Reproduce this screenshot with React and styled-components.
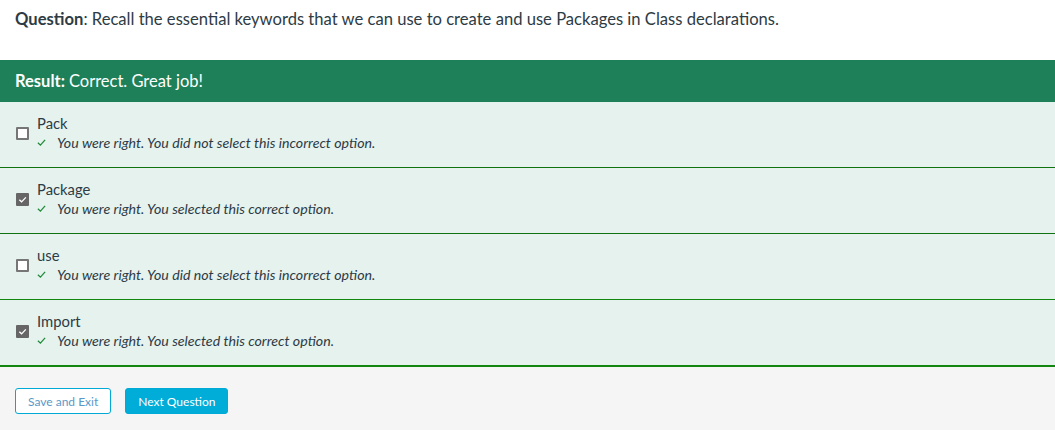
import React from 'react';
import styled, { createGlobalStyle } from 'styled-components';

const GlobalStyle = createGlobalStyle`
  html, body {
    margin: 0;
    padding: 0;
    background: #ffffff;
    font-family: Lato, "Open Sans", sans-serif;
    color: #2d3b45;
  }
`;

const Page = styled.div`
  width: 1055px;
  height: 430px;
  display: flex;
  flex-direction: column;
  overflow: hidden;
`;

const Question = styled.div`
  padding: 8px 15px 0;
  height: 60px;
  box-sizing: border-box;
  font-size: 16.6px;
  line-height: 22px;
  color: #2d3b45;

  b {
    font-weight: 700;
  }
`;

const ResultBar = styled.div`
  height: 42px;
  display: flex;
  align-items: center;
  padding: 0 15px;
  background: #1e8059;
  color: #ffffff;
  font-size: 16.5px;

  b {
    font-weight: 700;
    margin-right: 4px;
  }
`;

const Options = styled.div`
  background: #e6f2ee;
  box-shadow: 0 2px 3px rgba(0, 0, 0, 0.12);
`;

const Option = styled.div`
  display: flex;
  align-items: center;
  padding-left: 16px;
  box-sizing: border-box;
  border-top: ${({ $first, $last }) =>
    $first ? 'none' : `1px solid ${$last ? '#11870f' : '#0f730f'}`};
  border-bottom: ${({ $last }) => ($last ? '2px solid #11870f' : 'none')};
  height: ${({ $first, $last }) => ($first ? '65px' : $last ? '68px' : '66px')};
`;

const Box = styled.div`
  width: 13px;
  height: 13px;
  box-sizing: border-box;
  border-radius: 1px;
  margin-bottom: 2px;
  display: flex;
  align-items: center;
  justify-content: center;
  flex: 0 0 auto;
  border: ${({ $checked }) => ($checked ? 'none' : '2px solid #767676')};
  background: ${({ $checked }) => ($checked ? '#666666' : '#ffffff')};
`;

const OptionBody = styled.div`
  margin: 0 0 4px 8px;
  display: flex;
  flex-direction: column;
`;

const Label = styled.div`
  font-size: 14.8px;
  line-height: 20px;
  color: #2d3b45;
`;

const Feedback = styled.div`
  display: flex;
  align-items: center;
  font-size: 14.2px;
  font-style: italic;
  line-height: 20px;
  color: #2d3b45;

  svg {
    margin: 0 11px 0 0;
  }
`;

const Footer = styled.div`
  flex: 1;
  background: #f5f5f5;
  display: flex;
  align-items: flex-start;
  gap: 14px;
  padding: 21px 15px 0;
`;

const Button = styled.button`
  height: 26px;
  padding: 0 12px;
  border-radius: 3px;
  font-family: Lato, "Open Sans", sans-serif;
  font-size: 12px;
  cursor: pointer;
  border: 1px solid #00a9d6;
  background: ${({ $primary }) => ($primary ? '#00acd8' : '#ffffff')};
  color: ${({ $primary }) => ($primary ? '#ffffff' : '#5a98c9')};
`;

const Tick = ({ color = '#1f8a3a', size = 9 }) => (
  <svg width={size} height={size} viewBox="0 0 10 10">
    <path d="M1 5.3 L3.8 8 L9 2" fill="none" stroke={color} strokeWidth="1.4" />
  </svg>
);

const options = [
  { label: 'Pack', checked: false, note: 'You were right. You did not select this incorrect option.' },
  { label: 'Package', checked: true, note: 'You were right. You selected this correct option.' },
  { label: 'use', checked: false, note: 'You were right. You did not select this incorrect option.' },
  { label: 'Import', checked: true, note: 'You were right. You selected this correct option.' },
];

export default function App() {
  return (
    <Page>
      <GlobalStyle />
      <Question>
        <b>Question</b>: Recall the essential keywords that we can use to create and use Packages in Class declarations.
      </Question>
      <ResultBar>
        <b>Result:</b> Correct. Great job!
      </ResultBar>
      <Options>
        {options.map((opt, i) => (
          <Option key={opt.label} $first={i === 0} $last={i === options.length - 1}>
            <Box $checked={opt.checked}>
              {opt.checked && (
                <svg width="9" height="9" viewBox="0 0 10 10">
                  <path d="M1.5 5.2 L4 7.6 L8.7 2.6" fill="none" stroke="#ffffff" strokeWidth="1.5" />
                </svg>
              )}
            </Box>
            <OptionBody>
              <Label>{opt.label}</Label>
              <Feedback>
                <Tick />
                {opt.note}
              </Feedback>
            </OptionBody>
          </Option>
        ))}
      </Options>
      <Footer>
        <Button>Save and Exit</Button>
        <Button $primary>Next Question</Button>
      </Footer>
    </Page>
  );
}
